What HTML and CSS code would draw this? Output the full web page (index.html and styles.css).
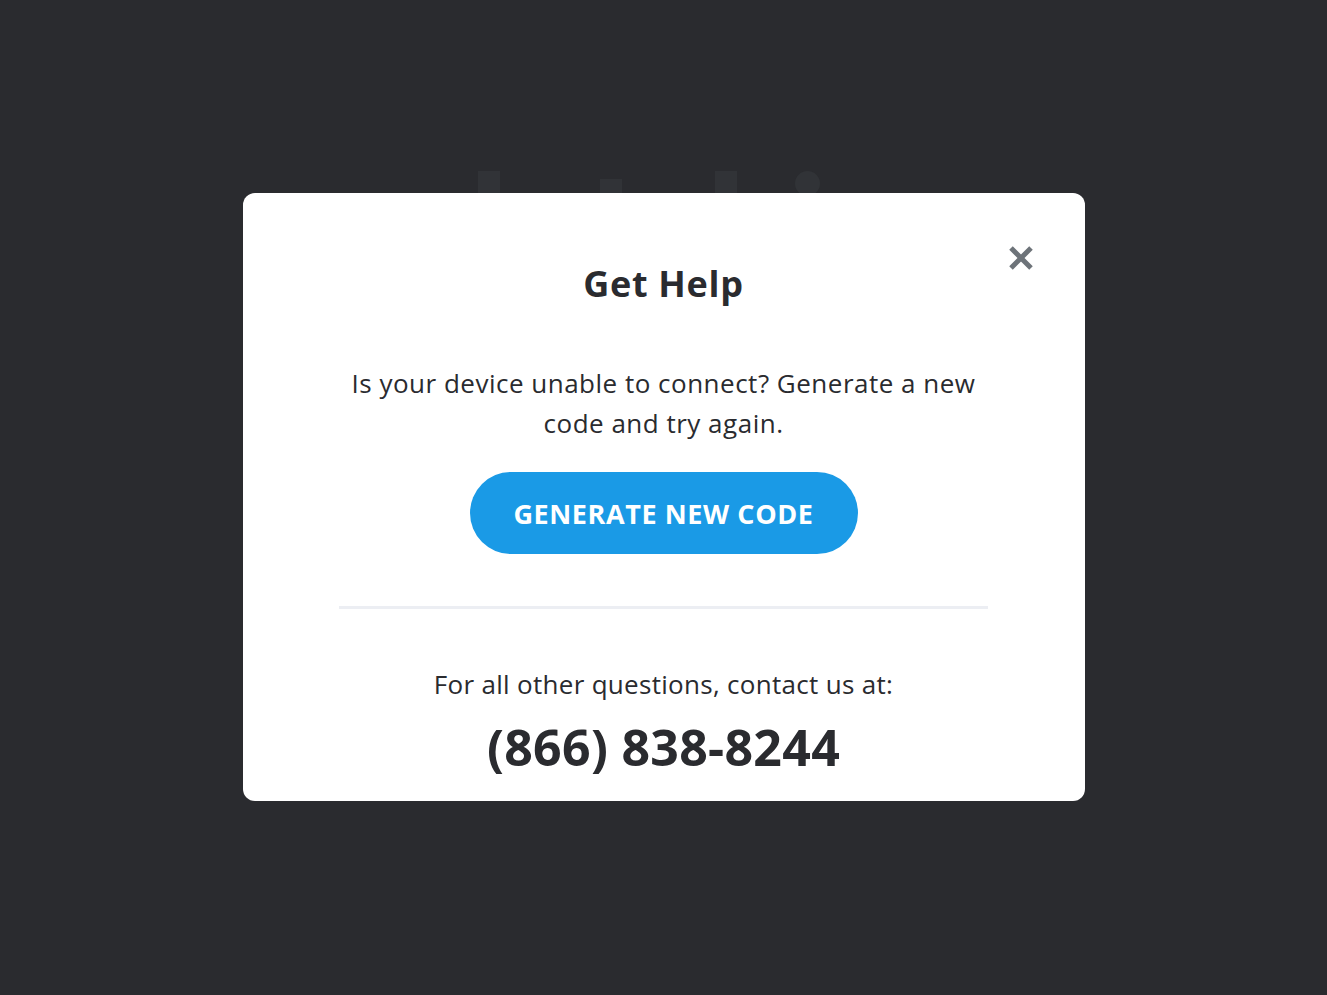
FILE: index.html
```html
<!DOCTYPE html>
<html lang="en">
<head>
<meta charset="utf-8">
<title>Get Help</title>
<link rel="stylesheet" href="styles.css">
</head>
<body>
<div class="page">
  <div class="bg-icons">
    <span class="bg-sq tall"></span>
    <span class="bg-sq short"></span>
    <span class="bg-sq tall"></span>
    <span class="bg-dot"></span>
  </div>
</div>
<div class="overlay">
  <div class="modal">
    <button class="close" aria-label="Close">
      <svg width="26" height="26" viewBox="0 0 26 26"><path d="M3 3L23 23M23 3L3 23" stroke="#6d7379" stroke-width="5" stroke-linecap="butt"/></svg>
    </button>
    <h1 class="title">Get Help</h1>
    <p class="lead">Is your device unable to connect? Generate a new code and try again.</p>
    <button class="cta">GENERATE NEW CODE</button>
    <hr class="divider">
    <p class="other">For all other questions, contact us at:</p>
    <p class="phone">(866) 838-8244</p>
  </div>
</div>
</body>
</html>
```
FILE: styles.css
```css
html, body {
  margin: 0;
  height: 100%;
  background: #2a2b2f;
}
body {
  font-family: "Open Sans", "Lato", sans-serif;
  color: #2a2b2f;
}
.page {
  height: 100%;
}
.bg-icons {
  display: flex;
  align-items: flex-end;
  justify-content: center;
  padding-top: 171px;
  padding-right: 30px;
  height: 22px;
}
.bg-sq { display: block; background: #313337; width: 22px; }
.bg-sq.tall { height: 22px; }
.bg-sq.short { height: 14px; }
.bg-icons > :nth-child(1) { margin-right: 100px; }
.bg-icons > :nth-child(2) { margin-right: 93px; }
.bg-icons > :nth-child(3) { margin-right: 58px; }
.bg-dot { display: block; width: 25px; height: 25px; border-radius: 50%; background: #313337; margin-bottom: -3px; }

.overlay {
  position: absolute;
  inset: 0;
  display: flex;
  justify-content: center;
  align-items: flex-start;
  padding-top: 193px;
}
.modal {
  position: relative;
  width: 842px;
  height: 608px;
  box-sizing: border-box;
  background: #fff;
  border-radius: 12px;
  display: flex;
  flex-direction: column;
  align-items: center;
  padding-top: 62px;
}
.close {
  position: absolute;
  top: 52px;
  right: 51px;
  width: 26px;
  height: 26px;
  padding: 0;
  border: 0;
  background: none;
  display: flex;
}
.title {
  margin: 0;
  font-size: 36px;
  font-weight: 700;
  letter-spacing: 0.7px;
  line-height: 58px;
  color: #2a2b2f;
}
.lead {
  margin: 50px 0 0;
  width: 680px;
  text-align: center;
  font-size: 26px;
  letter-spacing: 0.5px;
  line-height: 40px;
  color: #2a2b2f;
}
.cta {
  margin-top: 29px;
  width: 388px;
  height: 82px;
  border: 0;
  border-radius: 41px;
  background: #1a9ae6;
  color: #fff;
  font-family: inherit;
  font-size: 27px;
  font-weight: 700;
  letter-spacing: 0.6px;
}
.divider {
  margin: 52px 0 0;
  width: 649px;
  height: 3px;
  border: 0;
  background: #eceef3;
}
.other {
  margin: 55px 0 0;
  font-size: 26px;
  letter-spacing: 0.3px;
  line-height: 40px;
}
.phone {
  margin: 15px 0 0;
  font-size: 50px;
  font-weight: 700;
  letter-spacing: 0.3px;
  line-height: 56px;
}
```
